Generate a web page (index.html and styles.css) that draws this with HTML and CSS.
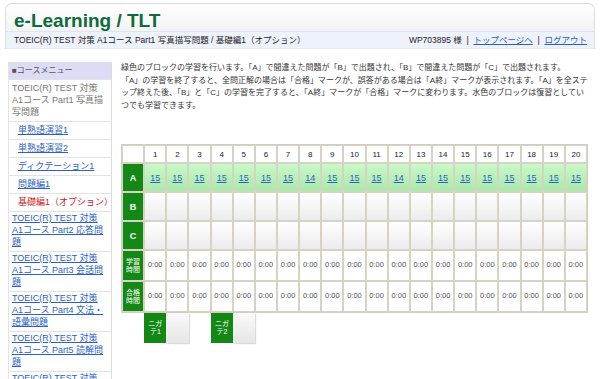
FILE: index.html
```html
<!DOCTYPE html>
<html lang="ja">
<head>
    <meta charset="UTF-8">
    <meta name="viewport" content="width=device-width, initial-scale=1.0">
    <title>e-Learning / TLT</title>
    <link rel="stylesheet" href="styles.css">
</head>
<body>
    <div class="header">
        <div class="site-title">e-Learning / TLT</div>
        <div class="crumb">
            <span>TOEIC(R) TEST 対策 A1コース Part1 写真描写問題 / 基礎編1（オプション）</span>
            <span>WP703895 様 &nbsp;|&nbsp; <a href="#">トップページへ</a> &nbsp;|&nbsp; <a href="#">ログアウト</a></span>
        </div>
    </div>

    <div class="page">
        <div class="side">
            <div class="side-title">■コースメニュー</div>
            <div class="side-item current">TOEIC(R) TEST 対策 A1コース Part1 写真描写問題</div>
            <div class="side-sub"><a href="#">単熟語演習1</a></div>
            <div class="side-sub"><a href="#">単熟語演習2</a></div>
            <div class="side-sub"><a href="#">ディクテーション1</a></div>
            <div class="side-sub"><a href="#">問題編1</a></div>
            <div class="side-sub active">基礎編1（オプション）</div>
            <div class="side-item"><a href="#">TOEIC(R) TEST 対策 A1コース Part2 応答問題</a></div>
            <div class="side-item"><a href="#">TOEIC(R) TEST 対策 A1コース Part3 会話問題</a></div>
            <div class="side-item"><a href="#">TOEIC(R) TEST 対策 A1コース Part4 文法・語彙問題</a></div>
            <div class="side-item"><a href="#">TOEIC(R) TEST 対策 A1コース Part5 読解問題</a></div>
            <div class="side-item"><a href="#">TOEIC(R) TEST 対策 A1コース Part6 長文問題</a></div>
        </div>

        <div class="main">
            <p class="intro">
                緑色のブロックの学習を行います。「A」で間違えた問題が「B」で出題され、「B」で間違えた問題が「C」で出題されます。<br>
                「A」の学習を終了すると、全問正解の場合は「合格」マークが、誤答がある場合は「A終」マークが表示されます。「A」を全ステップ終えた後、「B」と「C」の学習を完了すると、「A終」マークが「合格」マークに変わります。水色のブロックは復習としていつでも学習できます。
            </p>

            <table class="steps">
                <tbody id="steps-body">
                    <tr class="head-row" id="head-row"><td></td></tr>
                    <tr class="row-a" id="row-a"><th>A</th></tr>
                    <tr class="row-empty" id="row-b"><th>B</th></tr>
                    <tr class="row-empty" id="row-c"><th>C</th></tr>
                    <tr class="row-time" id="row-study"><th class="small">学習<br>時間</th></tr>
                    <tr class="row-time" id="row-pass"><th class="small">合格<br>時間</th></tr>
                </tbody>
            </table>

            <table class="weak">
                <tr>
                    <td></td>
                    <td class="weak-label">ニガ<br>テ1</td>
                    <td class="weak-box"></td>
                    <td></td>
                    <td class="weak-label">ニガ<br>テ2</td>
                    <td class="weak-box"></td>
                    <td></td><td></td><td></td><td></td><td></td><td></td><td></td><td></td>
                    <td></td><td></td><td></td><td></td><td></td><td></td><td></td>
                </tr>
            </table>
        </div>
    </div>

    <script>
        // scores for row A, steps 1-20
        const scores = [15, 15, 15, 15, 15, 15, 15, 14, 15, 15, 15, 14, 15, 15, 15, 15, 15, 15, 15, 15];

        const head = document.getElementById('head-row');
        const rowA = document.getElementById('row-a');
        const rowB = document.getElementById('row-b');
        const rowC = document.getElementById('row-c');
        const study = document.getElementById('row-study');
        const pass = document.getElementById('row-pass');

        for (let i = 0; i < 20; i++) {
            head.innerHTML += `<td>${i + 1}</td>`;
            rowA.innerHTML += `<td><a href="#">${scores[i]}</a></td>`;
            rowB.innerHTML += '<td></td>';
            rowC.innerHTML += '<td></td>';
            study.innerHTML += '<td>0:00</td>';
            pass.innerHTML += '<td>0:00</td>';
        }
    </script>
</body>
</html>
```

FILE: styles.css
```css
body {
    margin: 0;
    font-family: "Liberation Sans", "Noto Sans CJK JP", sans-serif;
    font-size: 8px;
    color: #333;
    background: white;
}

a {
    color: #2c5fc8;
}

.header {
    margin: 3px 5px 0;
    border: 1px solid #dcdcdc;
    border-bottom: none;
    border-radius: 7px 7px 0 0;
    background: linear-gradient(#ffffff, #ebebeb);
}

.site-title {
    height: 27px;
    line-height: 33px;
    padding-left: 8px;
    font-size: 19px;
    font-weight: bold;
    color: #0e6b3c;
    overflow: hidden;
}

.crumb {
    display: flex;
    justify-content: space-between;
    height: 16px;
    line-height: 16px;
    padding: 0 7px 0 8px;
    background: #edf2fb;
    border-top: 1px solid #dfe5f0;
    border-bottom: 1px solid #e6e9ee;
    font-size: 8.5px;
    color: #222;
}

.page {
    display: flex;
    align-items: flex-start;
    padding: 13px 0 0 8px;
}

.side {
    width: 102px;
    flex: none;
    border-left: 1px solid #e4e4e4;
    border-right: 1px solid #dcdcdc;
}

.side-title {
    height: 17px;
    line-height: 17px;
    padding-left: 3px;
    background: #dcdcf4;
    color: #555;
}

.side-item {
    padding: 0 3px 3px;
    border-top: 1px solid #e2e2e2;
    font-size: 9px;
    line-height: 12px;
}

.side-item.current {
    color: #777;
    padding-top: 2px;
}

.side-sub {
    height: 17px;
    line-height: 17px;
    padding-left: 9px;
    border-top: 1px solid #e2e2e2;
    font-size: 9px;
}

.side-sub.active {
    color: #cc2020;
}

.main {
    flex: 1;
    padding: 0 8px 0 9px;
}

.intro {
    margin: 0;
    font-size: 8px;
    line-height: 12.5px;
    color: #333;
}

.steps {
    width: 467px;
    margin-top: 32px;
    table-layout: fixed;
    border-collapse: separate;
    border-spacing: 0;
    border: 1px solid #d2cebf;
}

.steps td, .steps th {
    border: 1px solid #d6d2c4;
    padding: 0;
    text-align: center;
    vertical-align: middle;
}

.steps th {
    background: #148814;
    color: white;
    font-size: 9px;
    font-weight: bold;
}

.steps th.small {
    font-size: 7px;
    line-height: 8px;
    font-weight: normal;
}

.head-row td {
    height: 16px;
    font-size: 8px;
    color: #222;
    background: white;
}

.row-a td {
    height: 27px;
    background: linear-gradient(#c9f8c9, #a9e9a9);
}

.row-a a {
    font-size: 9px;
    color: #2c5fc8;
}

.row-empty td, .row-empty th {
    height: 27px;
}

.row-empty td {
    background: linear-gradient(#ffffff, #ececec);
}

.row-time td {
    height: 26px;
    font-size: 7.5px;
    color: #555;
    background: white;
    vertical-align: middle;
    padding-bottom: 3px;
}

.weak {
    width: 467px;
    table-layout: fixed;
    border-collapse: separate;
    border-spacing: 0;
    margin-left: 1px;
}

.weak td {
    height: 30px;
    padding: 0;
}

.weak-label {
    background: #148814;
    color: white;
    font-size: 7px;
    line-height: 8px;
    text-align: center;
}

.weak-box {
    background: linear-gradient(#fafafa, #e6e6e6);
    box-shadow: 1px 1px 1px #dcdcdc;
}
```
